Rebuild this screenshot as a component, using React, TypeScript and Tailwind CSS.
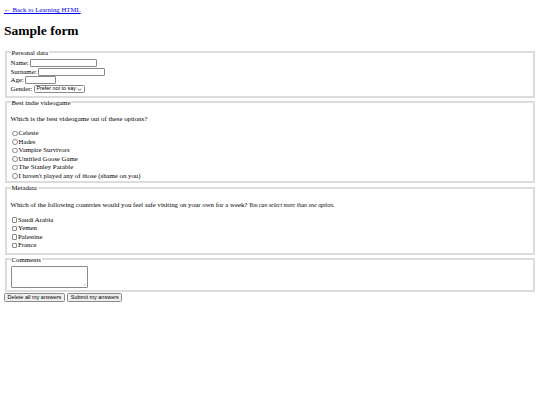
import React from 'react';

const games = [
  'Celeste',
  'Hades',
  'Vampire Survivors',
  'Untitled Goose Game',
  'The Stanley Parable',
  "I haven't played any of those (shame on you)",
];

const countries = ['Saudi Arabia', 'Yemen', 'Palestine', 'France'];

const Fieldset = ({ legend, children }: { legend: string; children: React.ReactNode }) => (
  <fieldset className="mx-[1px] border-2 border-[#dcdcdc] px-[3.5px] pb-[1px] pt-[2.5px]">
    <legend className="px-[1px] leading-[9px]">{legend}</legend>
    {children}
  </fieldset>
);

const TextInput = ({ w }: { w: string }) => (
  <input
    type="text"
    className={`h-[8px] ${w} rounded-[1px] border border-[#8a8a8a] bg-white align-middle`}
  />
);

const btn =
  "h-[9.5px] rounded-[1.5px] border border-[#8a8a8a] bg-[#efefef] px-[2.5px] font-['Liberation_Sans'] text-[5.5px] leading-none";

export default function App() {
  return (
    <div className="min-h-[405px] bg-white px-[4px] pt-[6px] font-['Liberation_Serif'] text-[6.8px] leading-[8.5px] text-black">
      <a href="#" className="text-[#0000ee] underline">
        ← Back to Learning HTML
      </a>

      <h1 className="mt-[8px] mb-[9px] font-['Liberation_Serif'] text-[13.5px] leading-[16px] font-bold">
        Sample form
      </h1>

      <form>
        <Fieldset legend="Personal data">
          <div className="flex flex-col pb-[1px]">
            <div className="flex items-center gap-[1.5px] h-[8.5px]">
              <label>Name:</label>
              <TextInput w="w-[67px]" />
            </div>
            <div className="flex items-center gap-[1.5px] h-[8.5px]">
              <label>Surname:</label>
              <TextInput w="w-[67px]" />
            </div>
            <div className="flex items-center gap-[1.5px] h-[8.5px]">
              <label>Age:</label>
              <TextInput w="w-[31px]" />
            </div>
            <div className="flex items-center gap-[1.5px] h-[9px]">
              <label>Gender:</label>
              <span className="flex h-[8px] w-[51px] items-center justify-between whitespace-nowrap rounded-[1.5px] border border-[#8a8a8a] bg-white px-[1.5px] font-['Liberation_Sans'] text-[5.4px] leading-none">
                Prefer not to say
                <svg viewBox="0 0 10 10" className="h-[5px] w-[5px]">
                  <path d="M2 3.5 L5 6.5 L8 3.5" fill="none" stroke="#222" strokeWidth="1.6" />
                </svg>
              </span>
            </div>
          </div>
        </Fieldset>

        <Fieldset legend="Best indie videogame">
          <p className="mt-[6px] mb-[5.5px]">Which is the best videogame out of these options?</p>
          <div className="flex flex-col">
            {games.map((g) => (
              <label key={g} className="flex h-[8.5px] items-center">
                <span className="ml-[1.5px] mr-[1px] inline-block h-[5.5px] w-[5.5px] rounded-full border border-[#8a8a8a] bg-white" />
                {g}
              </label>
            ))}
          </div>
        </Fieldset>

        <Fieldset legend="Metadata">
          <p className="mt-[6px] mb-[6.5px]">
            Which of the following countries would you feel safe visiting on your own for a week?{' '}
            <em className="text-[5.8px]">You can select more than one option.</em>
          </p>
          <div className="flex flex-col pb-[2px]">
            {countries.map((c) => (
              <label key={c} className="flex h-[8.5px] items-center">
                <span className="ml-[1px] mr-[1px] inline-block h-[5.5px] w-[5.5px] rounded-[1px] border border-[#8a8a8a] bg-white" />
                {c}
              </label>
            ))}
          </div>
        </Fieldset>

        <Fieldset legend="Comments">
          <div className="relative mb-[1px] h-[22px] w-[77px] rounded-[1px] border border-[#8a8a8a] bg-white">
            <svg viewBox="0 0 6 6" className="absolute bottom-[1px] right-[1px] h-[3px] w-[3px]">
              <path d="M1 6 L6 1 M3.5 6 L6 3.5" stroke="#999" strokeWidth="0.8" />
            </svg>
          </div>
        </Fieldset>

        <div className="flex gap-[2.5px] pt-[0.5px]">
          <button type="button" className={btn}>
            Delete all my answers
          </button>
          <button type="button" className={btn}>
            Submit my answers
          </button>
        </div>
      </form>
    </div>
  );
}
